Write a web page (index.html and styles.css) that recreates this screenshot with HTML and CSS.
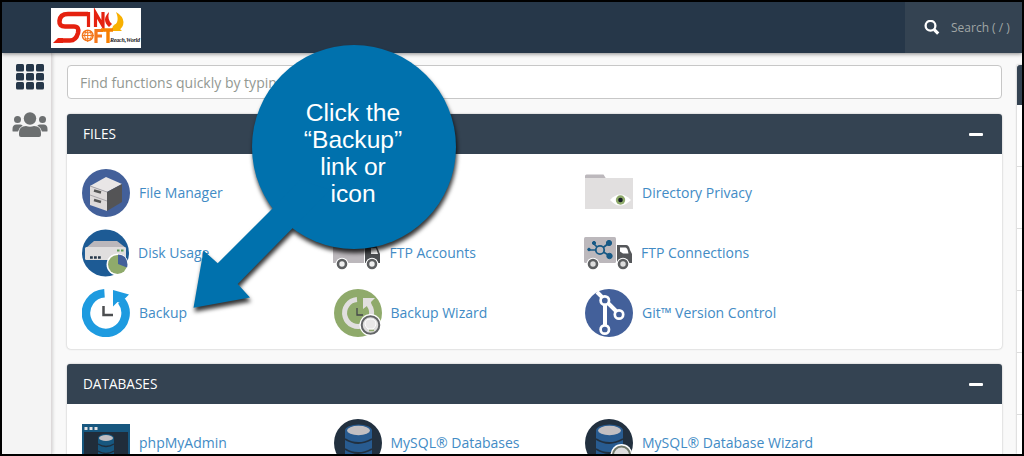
FILE: index.html
```html
<!DOCTYPE html>
<html lang="en">
<head>
<meta charset="utf-8">
<title>cPanel</title>
<link rel="stylesheet" href="styles.css">
</head>
<body>
<div class="frame">
  <header class="topbar">
    <div class="logo">
      <svg width="90" height="40" viewBox="0 0 90 40" fill="none">
        <path d="M37 6H17Q9 6 8.500 13Q8 18.500 14 18.500H23Q28.500 18.500 27 25Q25 32.500 19 32.500H8" stroke="#e5210f" stroke-width="4.600"/>
        <path d="M2 35l5-5h5v5z" fill="#e5210f"/>
        <path d="M37.500 4v15M44.500 19V5L52 18V4" stroke="#e5210f" stroke-width="3.200"/>
        <path d="M58 4q-8 8 0 15l3-3q-5-4-3-12z" fill="#e5210f"/>
        <path d="M65 4q7 4 7.500 10 0 6-6 9l-5-5q8-3 3.500-14zM59 23l5-7 7 7z" fill="#f8b000"/>
        <circle cx="36.700" cy="27.500" r="5.300" stroke="#f4771c" stroke-width="1.500"/>
        <path d="M31 27.500h12M36.700 22v12M33 24q4 2 8 0M33 31.500q4-2 8 0M35 22.500q-3 5 0 10M39 22.500q3 5 0 10" stroke="#f4771c"/>
        <path d="M45 35V22.500h7M45 28h6" stroke="#f4771c" stroke-width="3.200"/>
        <path d="M50 22h12M57 21v14" stroke="#f77f00" stroke-width="3.400"/>
      </svg>
      <span class="tagline">Reach,World</span>
    </div>
    <div class="search">
      <svg width="16" height="16" viewBox="0 0 16 16" fill="none" stroke="#fff"><circle cx="6.500" cy="5.800" r="4.900" stroke-width="2.300"/><path d="M10.200 9.700l4 4" stroke-width="3.200"/></svg>
      <span>Search ( / )</span>
    </div>
  </header>
  <div class="body">
    <nav class="sidebar">
      <svg width="28" height="26" viewBox="0 0 28 26" fill="#263749">
        <rect width="8" height="7.400" rx="1.500"/><rect x="10" width="8" height="7.400" rx="1.500"/><rect x="20" width="8" height="7.400" rx="1.500"/>
        <rect y="9" width="8" height="7.400" rx="1.500"/><rect x="10" y="9" width="8" height="7.400" rx="1.500"/><rect x="20" y="9" width="8" height="7.400" rx="1.500"/>
        <rect y="18" width="8" height="7.400" rx="1.500"/><rect x="10" y="18" width="8" height="7.400" rx="1.500"/><rect x="20" y="18" width="8" height="7.400" rx="1.500"/>
      </svg>
      <svg class="users" width="36" height="26" viewBox="0 0 36 26" fill="#6c6f70">
        <circle cx="18" cy="6.500" r="6.200"/><circle cx="5.500" cy="7.500" r="3.500"/><circle cx="30.500" cy="7.500" r="3.500"/>
        <path d="M7 23v-2q0-7 7-7 4 1.500 8 0 7 0 7 7v2q0 2-2 2H9q-2 0-2-2zM.5 19v-2q0-4.500 4-4.500H8q1.500 0 2.700 1Q7 15.500 6 19.500H1.500q-1 0-1-.5zM35.500 19v-2q0-4.500-4-4.500H28q-1.500 0-2.700 1 3.700 2 4.700 6h4.500q1 0 1-.5z"/>
      </svg>
    </nav>
    <main class="main">
      <div class="find">Find functions quickly by typing here.</div>
      <section class="panel">
        <h2 class="panel-head">FILES<i class="minus"></i></h2>
        <div class="grid">
          <a class="item"><svg class="icon" viewBox="0 0 48 48"><circle cx="24" cy="24" r="24" fill="#43609a"/><path d="M8 17L24 8l16 7-15 8z" fill="#e9e6e6"/><path d="M8 17l17 6v19L8 36z" fill="#dedada"/><path d="M25 23l15-8v18L25 42z" fill="#545456"/><path d="M8 26l17 6M8 17l17 6" stroke="#a9a6aa"/><path d="M12 21.500l7 2M12 31l7 2" stroke="#555" stroke-width="2.500"/></svg>File Manager</a>
          <a class="item"></a>
          <a class="item"><svg class="icon" viewBox="0 0 48 48"><path d="M0 7q0-1.500 1.500-1.500h17l2.500 4H0z" fill="#bcb8bc"/><path d="M0 9h48v31H0z" fill="#e1dfdf"/><path d="M25 31q10-11 21 0-11 11-21 0z" fill="#fff"/><circle cx="35.500" cy="31" r="4.700" fill="#8faa6b"/><circle cx="35.500" cy="31" r="2.300" fill="#151d25"/></svg>Directory Privacy</a>
          <a class="item nudge"><svg class="icon shift" viewBox="0 0 48 48"><circle cx="23.500" cy="24" r="23.500" fill="#1d5b95"/><path d="M4 19l8-7h23l9 7z" fill="#bbb7bb"/><rect x="3" y="18" width="41" height="13" rx="1.500" fill="#e0dede"/><path d="M8 28.500h11" stroke="#263749" stroke-width="2.500" stroke-dasharray="2.800 1.200"/><path d="M35 21.500h7" stroke="#5a9b55" stroke-width="2.200" stroke-dasharray="2.500 1.500"/><circle cx="35.500" cy="35.500" r="11" fill="#fff"/><circle cx="35.500" cy="35.500" r="9.500" fill="#8faa6b"/><path d="M36 35v-9.500q9 0 9.500 10 0 2-.5 3z" fill="#43609a"/></svg>Disk Usage</a>
          <a class="item nudge"><svg class="icon" viewBox="0 0 48 48"><path d="M0 8h31v26H0z" fill="#bcb8bc"/><path d="M32 16h11l4 9v9H32z" fill="#4b4d50"/><path d="M38 19h5l2 6h-7z" fill="#fff"/><g fill="#fff"><circle cx="9" cy="35" r="6.300"/><circle cx="39" cy="35" r="6.300"/></g><g fill="#eee" stroke="#5d5f61" stroke-width="2.600"><circle cx="9" cy="35" r="4"/><circle cx="39" cy="35" r="4"/></g></svg>FTP Accounts</a>
          <a class="item nudge"><svg class="icon" viewBox="0 0 48 48"><rect y="8" width="32" height="26" rx="1.500" fill="#bcb8bc"/><path d="M33 16h9q3 0 4 5l2 4v9H33z" fill="#55575a"/><path d="M36 18.500h5.500q2 0 3 6H39l-3-2z" fill="#fff"/><g stroke="#175985" fill="#175985"><path d="M16 21L25 14M16 21L9 14M16 21H4M16 21l10 6" stroke-width="1.700"/><circle cx="16" cy="21" r="4.200" fill="#bcb8bc" stroke-width="1.800"/><circle cx="10" cy="14" r="1.600"/><circle cx="25" cy="14" r="2.600"/><circle cx="5" cy="20.500" r="1.300"/><circle cx="25.500" cy="27" r="2.700"/></g><g fill="#fff"><circle cx="9" cy="35" r="6.300"/><circle cx="39" cy="35" r="6.300"/></g><g fill="#ddd" stroke="#5d5f61" stroke-width="2.600"><circle cx="9" cy="35" r="4"/><circle cx="39" cy="35" r="4"/></g></svg>FTP Connections</a>
          <a class="item"><svg class="icon" viewBox="0 0 48 48"><path d="M22.500 4.300A19.800 19.800 0 1 0 39.500 12" fill="none" stroke="#1e9be0" stroke-width="8.500"/><path d="M31 1l16 4.500-4.500 4.500-1 5-6-2-4.500 4.500z" fill="#1e9be0"/><path d="M21.500 17v9H31" fill="none" stroke="#4c4e50" stroke-width="2.500"/></svg>Backup</a>
          <a class="item"><svg class="icon" viewBox="0 0 48 48"><circle cx="24" cy="24" r="24" fill="#8faa6b"/><path d="M23 10.500A13.500 13.500 0 1 0 35 16" fill="none" stroke="#e1dfdf" stroke-width="5"/><path d="M29 9h12l-4 4 1 8-5-4-4 3z" fill="#e1dfdf"/><path d="M23 19v7h6" fill="none" stroke="#44464a" stroke-width="1.300"/><circle cx="36.500" cy="36" r="11" fill="#fff"/><circle cx="36.500" cy="36" r="8.800" fill="#dedddd" stroke="#636567" stroke-width="2"/><path d="M34 40q-3-3-3-5 0-5 5.500-5t5.500 5q0 2-3 5z" fill="#e9e8e8" stroke="#fff"/><path d="M35 41.500h5" stroke="#8faa6b" stroke-width="1.500"/></svg>Backup Wizard</a>
          <a class="item"><svg class="icon" viewBox="0 0 48 48"><circle cx="24" cy="24" r="24" fill="#43609a"/><g stroke="#fff" stroke-width="4" fill="none"><path d="M12 3l8 8v28M20 11l14 14"/><g fill="#43609a" stroke-width="2.700"><circle cx="19.800" cy="11.500" r="4.200"/><circle cx="34" cy="25.500" r="4.200"/><circle cx="19.800" cy="40.500" r="4.200"/></g></g></svg>Git™ Version Control</a>
        </div>
      </section>
      <section class="panel">
        <h2 class="panel-head">DATABASES<i class="minus"></i></h2>
        <div class="grid">
          <a class="item"><svg class="icon" viewBox="0 0 48 48"><path d="M0 5h48v43H0z" fill="#17577f"/><path d="M2 13h44v35H2z" fill="#202d3b"/><path d="M2.500 9.500h14" stroke="#e4e2e4" stroke-width="3" stroke-dasharray="3 2"/><path d="M16 19v26q8 5 16 0V19z" fill="#17577f"/><ellipse cx="24" cy="19" rx="8" ry="4" fill="#17577f"/><path d="M16 25q8 5 16 0M16 32q8 5 16 0" fill="none" stroke="#202d3b" stroke-width="1.300"/><ellipse cx="24" cy="19" rx="7" ry="3" fill="#c1bec2"/></svg>phpMyAdmin</a>
          <a class="item"><svg class="icon" viewBox="0 0 48 48"><circle cx="24" cy="24" r="24" fill="#22303f"/><path d="M11 11v25q13 9 27 0V11z" fill="#285b90"/><path d="M11 20q13 8 27 0M11 30q13 8 27 0" fill="none" stroke="#22303f" stroke-width="1.800"/><ellipse cx="24.500" cy="11.500" rx="13.500" ry="6" fill="#285b90"/><ellipse cx="24.500" cy="11.500" rx="11.500" ry="4.700" fill="#c2bfc2"/></svg>MySQL® Databases</a>
          <a class="item"><svg class="icon" viewBox="0 0 48 48"><circle cx="24" cy="24" r="24" fill="#22303f"/><path d="M11 11v25q13 9 27 0V11z" fill="#285b90"/><path d="M11 20q13 8 27 0M11 30q13 8 27 0" fill="none" stroke="#22303f" stroke-width="1.800"/><ellipse cx="24.500" cy="11.500" rx="13.500" ry="6" fill="#285b90"/><ellipse cx="24.500" cy="11.500" rx="11.500" ry="4.700" fill="#c2bfc2"/><circle cx="36.500" cy="36" r="11" fill="#fff"/><circle cx="36.500" cy="36" r="8.500" fill="#dedddd" stroke="#71786a" stroke-width="2"/></svg>MySQL® Database Wizard</a>
        </div>
      </section>
    </main>
    <aside class="stats">
      <div class="stats-head"></div>
      <div class="stat"></div><div class="stat"></div><div class="stat"></div><div class="stat"></div><div class="stat"></div><div class="stat"></div>
    </aside>
  </div>
  <div class="callout">
    <svg class="bubble" width="290" height="290" viewBox="180 35 290 290">
      <circle cx="354" cy="147" r="102" fill="#0071ad"/>
      <path d="M272 209L300 180 330 190 291.700 229 237.700 284 250 297.500 193.500 307.700 203.500 250.500 217.700 263.300Z" fill="#0071ad"/>
    </svg>
    <p class="callout-text">Click the<br>“Backup”<br>link or<br>icon</p>
  </div>
</div>
</body>
</html>
```

FILE: styles.css
```css
* { box-sizing: border-box; }
body { margin: 0; font: 14px/20px "Open Sans", sans-serif; }
.frame {
  position: relative;
  display: flex;
  flex-direction: column;
  height: 456px;
  border: 2px solid #000;
  overflow: hidden;
  background: #f9f9f9;
}
.topbar {
  display: flex;
  flex: none;
  justify-content: space-between;
  height: 51px;
  padding-left: 49px;
  background: #263749;
  box-shadow: 0 1px 4px rgba(0, 0, 0, .45);
  z-index: 1;
}
.logo { position: relative; width: 90px; height: 40px; margin-top: 6px; background: #fff; }
.logo svg { display: block; }
.tagline {
  position: absolute;
  left: 59px;
  top: 27px;
  font: italic bold 6px/10px "Liberation Serif", serif;
  letter-spacing: -.2px;
  color: #222;
}
.search {
  display: flex;
  align-items: center;
  gap: 11px;
  width: 117px;
  padding-left: 19px;
  background: #344352;
  font-size: 12px;
  color: #a0a6a5;
}
.search span { white-space: nowrap; }
.search svg { flex: none; }
.body { display: flex; flex: 1; min-height: 0; }
.sidebar {
  display: flex;
  flex: none;
  flex-direction: column;
  align-items: center;
  gap: 22px;
  width: 50px;
  padding: 11px 0 0 6px;
  border-right: 1px solid #ddd9da;
  background: #f4f4f4;
  box-shadow: 1px 0 3px rgba(0, 0, 0, .15);
}
.main { flex: none; width: 935px; margin-left: 15px; padding-top: 12px; }
.find {
  height: 34px;
  padding: 7px 12px;
  border: 1px solid #c7c7c7;
  border-radius: 4px;
  background: #fff;
  line-height: 20px;
  color: #929892;
}
.panel {
  margin-top: 15px;
  border-radius: 4px;
  background: #fff;
  box-shadow: 0 0 2px rgba(0, 0, 0, .3);
}
.panel-head {
  display: flex;
  align-items: center;
  justify-content: space-between;
  height: 40px;
  margin: 0;
  padding: 0 19px 0 16px;
  border-radius: 3px 3px 0 0;
  background: #344352;
  font-size: 13.600px;
  font-weight: 400;
  color: #fff;
}
.minus { width: 14px; height: 3px; border-radius: 1px; background: #fff; }
.grid {
  display: grid;
  grid-template-columns: repeat(3, 251.500px);
  grid-auto-rows: 48px;
  row-gap: 12px;
  padding: 15px 15px 12px;
}
.item { display: flex; align-items: center; gap: 9px; color: #428bc5; white-space: nowrap; }
.nudge { margin-left: -1px; }
.icon { flex: none; width: 48px; height: 48px; }
.shift { margin-left: 1px; margin-right: -1px; }
.stats { flex: none; width: 30px; margin: 12px 0 0 15px; background: #fff; box-shadow: 0 0 2px rgba(0, 0, 0, .3); }
.stats-head { height: 40px; border-radius: 3px 0 0; background: #344352; }
.stat { height: 62px; border-bottom: 1px solid #ddd; }
.callout { position: absolute; left: 178px; top: 33px; width: 290px; height: 290px; z-index: 2; }
.bubble { display: block; overflow: visible; filter: drop-shadow(1px 4px 2px rgba(0, 0, 0, .8)); }
.callout-text {
  position: absolute;
  left: 71px;
  top: 64px;
  width: 204px;
  margin: 0;
  text-align: center;
  font: 24.600px/27px "Liberation Sans", Arial, sans-serif;
  color: #fff;
}
```
